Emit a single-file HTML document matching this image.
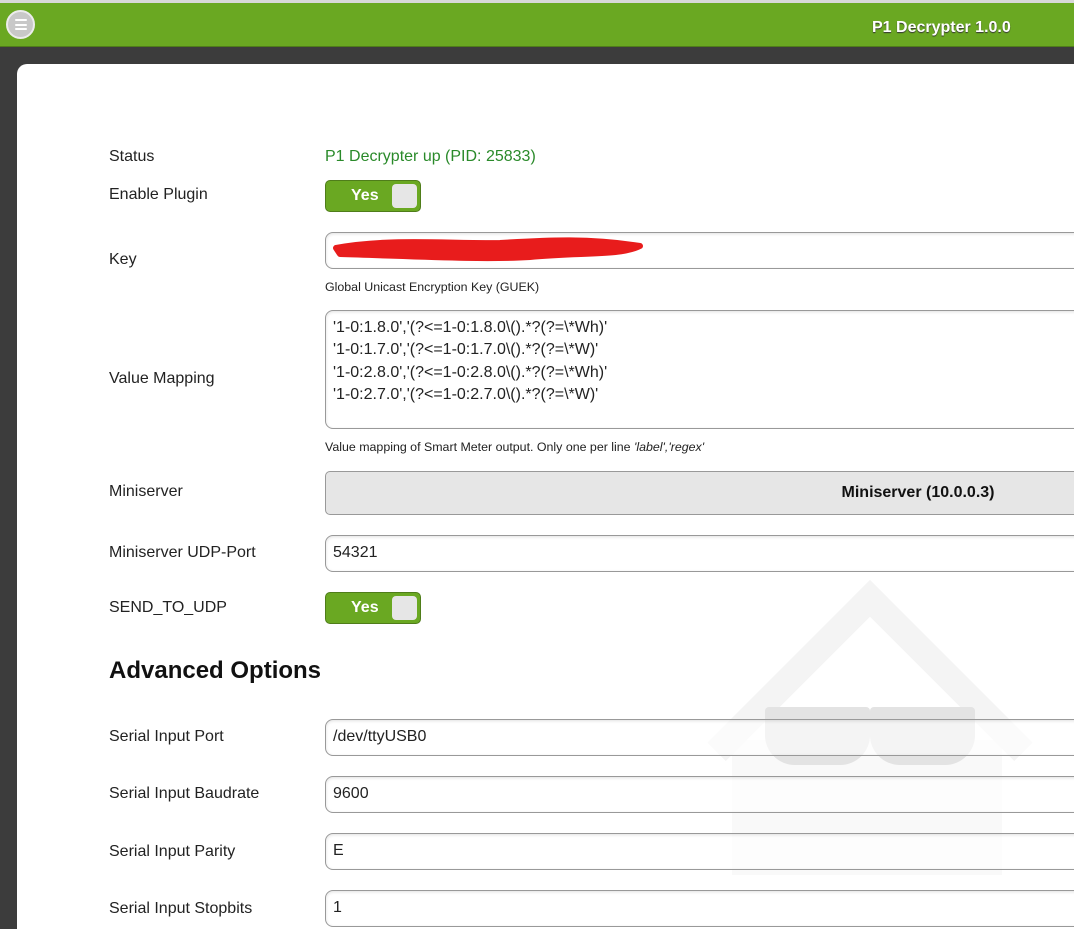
<!DOCTYPE html>
<html style="width:1074px;height:929px;overflow:hidden"><head><meta charset="utf-8">
<style>
*{box-sizing:border-box;margin:0;padding:0}
body{width:1074px;height:929px;overflow:hidden;background:#3c3c3c;font-family:"Liberation Sans",Arial,sans-serif;position:relative}
.top{position:absolute;left:0;top:0;width:1074px;height:3px;background:#d8d8d8}
.bar{position:absolute;left:0;top:3px;width:1074px;height:44px;background:#6aa822;border-bottom:1px solid #4f7d1a}
.menu{position:absolute;left:6px;top:7px;width:29px;height:29px;border-radius:50%;background:#c8c8c8;border:2px solid #ececec}
.menu i{position:absolute;left:7px;width:12px;height:2px;background:#fff;border-radius:1px}
.title{position:absolute;left:872px;top:16px;color:#fff;font-weight:bold;font-size:16px;text-shadow:0 1px 1px #333}
.panel{position:absolute;left:17px;top:64px;width:1100px;height:900px;background:#fff;border-radius:10px 0 0 0}
.lbl{position:absolute;left:109px;font-size:16px;color:#222;transform:translateY(-50%)}
.val{position:absolute;left:325px;font-size:16px;transform:translateY(-50%)}
.inp{position:absolute;left:325px;width:800px;height:37px;border:1px solid #999;border-radius:8px;box-shadow:inset 0 1px 3px rgba(0,0,0,.12);font-size:16px;color:#222;padding:8px 0 0 7px;background:rgba(255,255,255,.6)}
.help{position:absolute;left:325px;font-size:12.4px;color:#222}
.tog{position:absolute;left:325px;width:96px;height:32px;background:#6aa822;border:1px solid #4f7d1a;border-radius:5px}
.tog b{position:absolute;left:25px;top:6px;color:#fff;font-size:16px}
.tog i{position:absolute;right:3px;top:3px;width:25px;height:24px;background:#e6e6e6;border-radius:4px}
.btn{position:absolute;left:325px;top:471px;width:1186px;height:44px;background:#e6e6e6;border:1px solid #999;border-radius:5px;text-align:center;font-weight:bold;font-size:16px;line-height:42px;color:#111}
</style></head><body>
<div class="top"></div>
<div class="bar"><div class="menu"><i style="top:7px"></i><i style="top:11.5px"></i><i style="top:16px"></i></div><div class="title">P1 Decrypter 1.0.0</div></div>
<div class="panel"></div>
<!-- watermark -->
<div style="position:absolute;left:732px;top:740px;width:270px;height:135px;background:#f9f9f9"></div>
<div style="position:absolute;width:230px;height:230px;border:26px solid #f4f4f4;border-right:none;border-bottom:none;transform:rotate(45deg);transform-origin:0 0;left:870px;top:580px"></div>
<div style="position:absolute;left:765px;top:707px;width:105px;height:58px;background:#e3e3e3;border-radius:4px 4px 30px 30px"></div>
<div style="position:absolute;left:870px;top:707px;width:105px;height:58px;background:#e3e3e3;border-radius:4px 4px 30px 30px"></div>

<div class="lbl" style="top:157px">Status</div>
<div class="val" style="top:157px;color:#2a8a2a">P1 Decrypter up (PID: 25833)</div>
<div class="lbl" style="top:195px">Enable Plugin</div>
<div class="tog" style="top:180px"><b>Yes</b><i></i></div>
<div class="lbl" style="top:260px">Key</div>
<div class="inp" style="top:232px"></div>
<svg style="position:absolute;left:330px;top:234px" width="320" height="32"><path d="M6 14 C60 4 120 10 170 9 C220 6 260 4 310 12 C290 22 250 18 200 23 C150 26 80 22 10 20 Z" fill="#e81c1c" stroke="#e81c1c" stroke-width="6" stroke-linejoin="round"/></svg>
<div class="help" style="top:280px">Global Unicast Encryption Key (GUEK)</div>
<div class="lbl" style="top:379px">Value Mapping</div>
<div class="inp" style="top:310px;height:119px;line-height:22.3px;padding-top:6px">'1-0:1.8.0','(?&lt;=1-0:1.8.0\().*?(?=\*Wh)'<br>'1-0:1.7.0','(?&lt;=1-0:1.7.0\().*?(?=\*W)'<br>'1-0:2.8.0','(?&lt;=1-0:2.8.0\().*?(?=\*Wh)'<br>'1-0:2.7.0','(?&lt;=1-0:2.7.0\().*?(?=\*W)'</div>
<div class="help" style="top:440px">Value mapping of Smart Meter output. Only one per line <i>'label','regex'</i></div>
<div class="lbl" style="top:492px">Miniserver</div>
<div class="btn">Miniserver (10.0.0.3)</div>
<div class="lbl" style="top:553px">Miniserver UDP-Port</div>
<div class="inp" style="top:535px">54321</div>
<div class="lbl" style="top:608px">SEND_TO_UDP</div>
<div class="tog" style="top:592px"><b>Yes</b><i></i></div>
<div style="position:absolute;left:109px;top:657px;font-size:24px;font-weight:bold;color:#111">Advanced Options</div>
<div class="lbl" style="top:737px">Serial Input Port</div>
<div class="inp" style="top:719px">/dev/ttyUSB0</div>
<div class="lbl" style="top:794px">Serial Input Baudrate</div>
<div class="inp" style="top:776px">9600</div>
<div class="lbl" style="top:852px">Serial Input Parity</div>
<div class="inp" style="top:833px">E</div>
<div class="lbl" style="top:909px">Serial Input Stopbits</div>
<div class="inp" style="top:890px">1</div>
</body></html>
